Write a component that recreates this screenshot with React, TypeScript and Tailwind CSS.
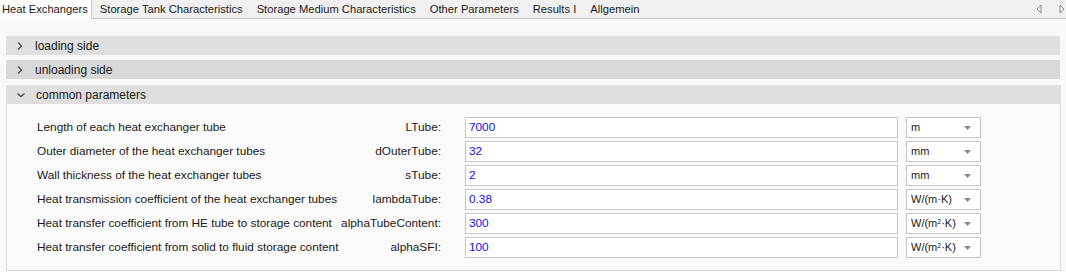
import React from "react";

const tabs = [
  "Heat Exchangers",
  "Storage Tank Characteristics",
  "Storage Medium Characteristics",
  "Other Parameters",
  "Results I",
  "Allgemein",
];

type Row = { label: string; name: string; value: string; unit: React.ReactNode };

const sq = (
  <>
    W/(m<sup className="text-[7px]">2</sup>·K)
  </>
);

const rows: Row[] = [
  { label: "Length of each heat exchanger tube", name: "LTube:", value: "7000", unit: "m" },
  { label: "Outer diameter of the heat exchanger tubes", name: "dOuterTube:", value: "32", unit: "mm" },
  { label: "Wall thickness of the heat exchanger tubes", name: "sTube:", value: "2", unit: "mm" },
  { label: "Heat transmission coefficient of the heat exchanger tubes", name: "lambdaTube:", value: "0.38", unit: "W/(m·K)" },
  { label: "Heat transfer coefficient from HE tube to storage content", name: "alphaTubeContent:", value: "300", unit: sq },
  { label: "Heat transfer coefficient from solid to fluid storage content", name: "alphaSFI:", value: "100", unit: sq },
];

function Chevron({ open }: { open?: boolean }) {
  return (
    <svg width="10" height="10" viewBox="0 0 10 10" className="shrink-0">
      {open ? (
        <path d="M1.5 3.5 L5 6.5 L8.5 3.5" fill="none" stroke="#555" strokeWidth="1.5" />
      ) : (
        <path d="M3 1.5 L6.5 5 L3 8.5" fill="none" stroke="#555" strokeWidth="1.5" />
      )}
    </svg>
  );
}

function SectionHeader({ title, open, shade }: { title: string; open?: boolean; shade: string }) {
  return (
    <div className={`flex h-[19px] items-center gap-[10px] pl-[9px] ${shade}`}>
      <Chevron open={open} />
      <span className="text-[12px] text-[#1a1a1a]">{title}</span>
    </div>
  );
}

export default function App() {
  return (
    <div
      className="h-[272px] w-[1066px] overflow-hidden bg-[#f9f9f9] text-[11.8px] text-[#1a1a1a]"
      style={{ fontFamily: '"Liberation Sans", Arial, sans-serif' }}
    >
      <div className="flex h-[19px] items-stretch border-b border-[#c8c8c8] bg-[#f0f0f0] text-[11.2px]">
        {tabs.map((t, i) => (
          <div
            key={t}
            className={
              i === 0
                ? "-mb-px flex items-center border-r border-[#c8c8c8] bg-white pl-[2px] pr-[3px]"
                : i === 1
                  ? "flex items-center pl-[8px] pr-[7px]"
                  : "flex items-center px-[7px]"
            }
          >
            <span>{t}</span>
          </div>
        ))}
        <div className="ml-auto flex items-center gap-[17px] pr-[1px]">
          <svg width="6" height="10" viewBox="0 0 6 10">
            <path d="M5 1 L1 5 L5 9 Z" fill="none" stroke="#8a8a8a" />
          </svg>
          <svg width="6" height="10" viewBox="0 0 6 10">
            <path d="M1 1 L5 5 L1 9 Z" fill="none" stroke="#8a8a8a" />
          </svg>
        </div>
      </div>

      <div className="flex flex-col gap-[5px] pl-[6px] pr-[6px] pt-[17px]">
        <SectionHeader title="loading side" shade="bg-[#dfdfdf]" />
        <SectionHeader title="unloading side" shade="bg-[#d9d9d9]" />
        <div className="-mr-px mt-px border border-[#dcdcdc] bg-[#fafafa]">
          <SectionHeader title="common parameters" open shade="bg-[#dfdfdf] -mx-px -mt-px pl-[10px]" />
          <div className="flex flex-col gap-[3px] pb-[12px] pl-[30px] pt-[13px]">
            {rows.map((r) => (
              <div key={r.name} className="flex h-[21px] items-center">
                <div className="flex w-[404px] items-center justify-between">
                  <span>{r.label}</span>
                  <span>{r.name}</span>
                </div>
                <div className="ml-[24px] flex h-[21px] w-[433px] items-center border border-[#c6c6c6] bg-white pl-[3px] text-[#1010f0]">
                  {r.value}
                </div>
                <div className="ml-[8px] flex h-[21px] w-[75px] items-center justify-between border border-[#c6c6c6] bg-white pl-[4px] pr-[9px] text-[11px]">
                  <span className="whitespace-nowrap">{r.unit}</span>
                  <svg width="7" height="4" viewBox="0 0 7 4" className="shrink-0">
                    <path d="M0 0 L7 0 L3.5 4 Z" fill="#8a8a8a" />
                  </svg>
                </div>
              </div>
            ))}
          </div>
        </div>
      </div>
    </div>
  );
}
